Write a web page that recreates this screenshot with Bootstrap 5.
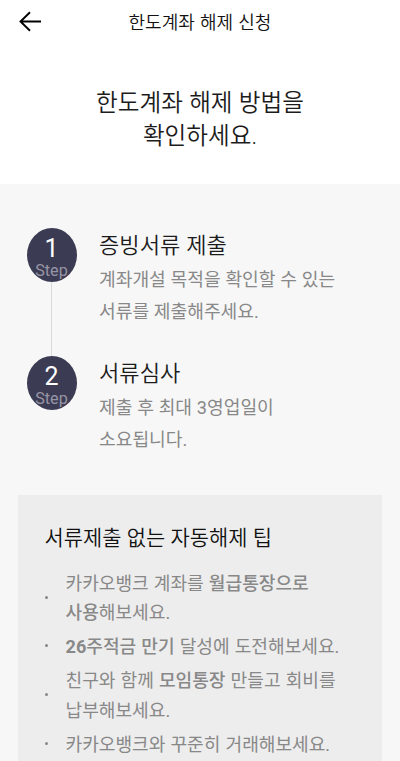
<!DOCTYPE html>
<html lang="ko">
<head>
<meta charset="utf-8">
<meta name="viewport" content="width=device-width, initial-scale=1">
<title>한도계좌 해제 신청</title>
<link href="https://cdn.jsdelivr.net/npm/bootstrap@5.3.0/dist/css/bootstrap.min.css" rel="stylesheet">
<style>
body{font-family:Roboto,"Noto Sans CJK KR",sans-serif;background:#f7f7f7;color:#1c1c1c;height:761px;overflow:hidden;word-break:keep-all}
.top-bar{height:44px;display:grid;grid-template-columns:60px 1fr 60px}
.top-title{font-size:18px;line-height:46px;color:#111;word-spacing:.8px;font-weight:350}
.hero{height:140px;padding-top:43px}
.hero-title{font-size:23.6px;line-height:33px;word-spacing:.5px;font-weight:350}
.steps{padding:44px 18px 0 26.5px}
.step{height:128px}
.step-rail{width:50px;margin-right:22.5px}
.step-dot{width:50px;height:54px;border-radius:50%;background:#3c3b54;color:#fff;flex:none}
.step-num{font-size:25px;line-height:26px;padding-top:8px}
.step-word{font-size:16.2px;line-height:18px;color:#9695a3}
.step-line{width:1px;background:#dadada}
.step-title{font-size:22.1px;line-height:35px;word-spacing:.5px;font-weight:350}
.step-text{font-size:18.15px;line-height:31.7px;color:#888;padding-top:1px;word-spacing:.3px}
.tips{margin:11px 18px 0;height:300px;background:#ededed;padding:27px 20px 0 26.5px}
.tips-title{font-size:20.9px;line-height:32px;color:#111;word-spacing:.3px;font-weight:350}
.tip-list{margin-top:15px;gap:4.6px;font-size:18.1px;line-height:29.4px;color:#888;word-spacing:.6px}
.tip-dot{width:3px;height:3px;border-radius:50%;background:#888;margin-right:18px;margin-bottom:2.5px;flex:none}
.tip-list strong{font-weight:500}
.tip-list .tip-num{font-weight:700}
</style>
</head>
<body>
<header class="bg-white">
  <div class="top-bar">
    <a href="#" class="d-flex" aria-label="뒤로"><svg width="60" height="44" viewBox="0 0 60 44" fill="none" stroke="#000" stroke-width="1.9"><path d="M41 21.5H20.2M30 12.2L20.5 21.5L30 30.8"/></svg></a>
    <div class="top-title text-center text-nowrap">한도계좌 해제 신청</div>
  </div>
  <div class="hero text-center"><h1 class="hero-title m-0">한도계좌 해제 방법을<br>확인하세요.</h1></div>
</header>
<main>
  <section class="steps">
    <div class="step d-flex">
      <div class="step-rail d-flex flex-column align-items-center">
        <div class="step-dot text-center"><div class="step-num">1</div><div class="step-word">Step</div></div>
        <div class="step-line flex-grow-1"></div>
      </div>
      <div class="text-nowrap"><h2 class="step-title m-0">증빙서류 제출</h2><p class="step-text m-0">계좌개설 목적을 확인할 수 있는<br>서류를 제출해주세요.</p></div>
    </div>
    <div class="step d-flex">
      <div class="step-rail d-flex flex-column align-items-center">
        <div class="step-dot text-center"><div class="step-num">2</div><div class="step-word">Step</div></div>
      </div>
      <div class="text-nowrap"><h2 class="step-title m-0">서류심사</h2><p class="step-text m-0">제출 후 최대 3영업일이<br>소요됩니다.</p></div>
    </div>
  </section>
  <section class="tips">
    <h2 class="tips-title mb-0">서류제출 없는 자동해제 팁</h2>
    <ul class="tip-list list-unstyled d-flex flex-column text-nowrap mb-0">
      <li class="d-flex align-items-center"><span class="tip-dot"></span><span>카카오뱅크 계좌를 <strong>월급통장으로<br>사용</strong>해보세요.</span></li>
      <li class="d-flex align-items-center"><span class="tip-dot"></span><span><strong><span class="tip-num">26</span>주적금 만기</strong> 달성에 도전해보세요.</span></li>
      <li class="d-flex align-items-center"><span class="tip-dot"></span><span>친구와 함께 <strong>모임통장</strong> 만들고 회비를<br>납부해보세요.</span></li>
      <li class="d-flex align-items-center"><span class="tip-dot"></span><span>카카오뱅크와 꾸준히 거래해보세요.</span></li>
    </ul>
  </section>
</main>
<script src="https://cdn.jsdelivr.net/npm/bootstrap@5.3.0/dist/js/bootstrap.bundle.min.js"></script>
</body>
</html>
